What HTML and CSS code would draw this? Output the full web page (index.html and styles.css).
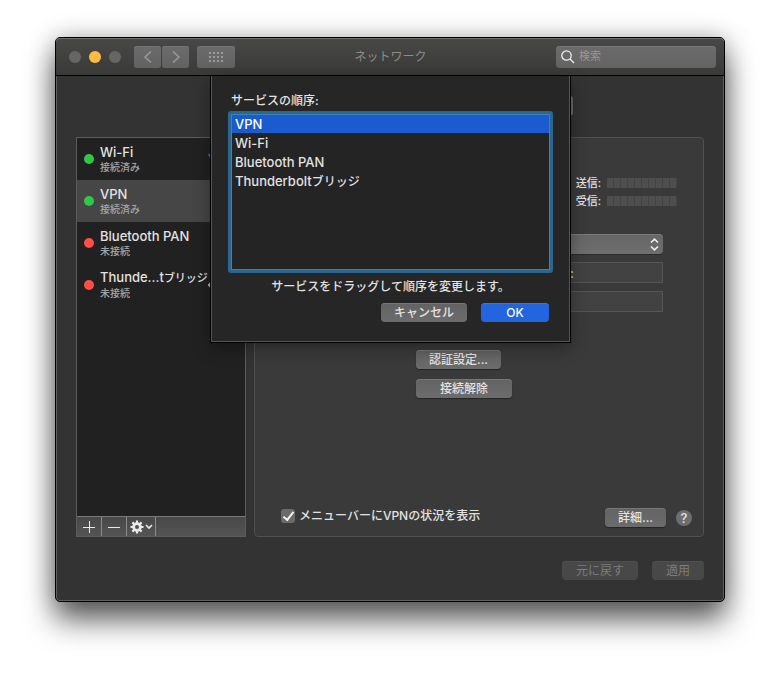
FILE: index.html
```html
<!DOCTYPE html>
<html lang="ja">
<head>
<meta charset="utf-8">
<title>ネットワーク</title>
<link rel="stylesheet" href="styles.css">
</head>
<body>
<main class="window">
  <header class="titlebar">
    <div class="lights"><span class="light"></span><span class="light light-min"></span><span class="light"></span></div>
    <div class="nav">
      <button class="tool" type="button" aria-label="戻る"><svg width="10" height="14" viewBox="0 0 10 14"><path d="M8 1.500 2 7l6 5.500"/></svg></button>
      <button class="tool" type="button" aria-label="進む"><svg width="10" height="14" viewBox="0 0 10 14"><path d="M2 1.500 8 7l-6 5.500"/></svg></button>
    </div>
    <button class="tool tool-wide" type="button" aria-label="すべてを表示"><svg width="14" height="10" viewBox="0 0 14 10"><path class="dots" d="M0 1h14M0 5h14M0 9h14"/></svg></button>
    <h1 class="title">ネットワーク</h1>
    <label class="search">
      <svg width="14" height="14" viewBox="0 0 14 14"><circle cx="5.500" cy="5.500" r="4.700"/><path d="m9 9 4 4"/></svg>
      <input type="search" placeholder="検索" aria-label="検索">
    </label>
  </header>

  <div class="content">
    <div class="location">
      <label for="location">ネ</label>
      <select id="location" class="popup"><option></option></select>
    </div>

    <div class="columns">
      <aside class="sidebar">
        <ul class="services">
          <li class="service">
            <span class="dot"></span>
            <div class="label"><div class="name">Wi-Fi</div><div class="state">接続済み</div></div>
            <svg class="kind kind-wifi" width="26" height="20" viewBox="0 0 26 20"><path d="M1 7Q13-3 25 7M5.500 11q7.500-6 15 0M9.500 15q3.500-3 7 0"/></svg>
          </li>
          <li class="service selected">
            <span class="dot"></span>
            <div class="label"><div class="name">VPN</div><div class="state">接続済み</div></div>
          </li>
          <li class="service">
            <span class="dot dot-off"></span>
            <div class="label"><div class="name">Bluetooth PAN</div><div class="state">未接続</div></div>
          </li>
          <li class="service">
            <span class="dot dot-off"></span>
            <div class="label"><div class="name">Thunde...t<span class="kana">ブリッジ</span></div><div class="state">未接続</div></div>
            <svg class="kind" width="26" height="20" viewBox="0 0 26 20"><path d="m7 4-6 6 6 6M19 4l6 6-6 6M9 10h1M13 10h1M17 10h1"/></svg>
          </li>
        </ul>
        <div class="actions">
          <button type="button" aria-label="追加"><svg width="12" height="12" viewBox="0 0 12 12"><path d="M0 6.500h12M6.500 0v12"/></svg></button>
          <button type="button" aria-label="削除"><svg width="12" height="12" viewBox="0 0 12 12"><path d="M0 6.500h12"/></svg></button>
          <button type="button" class="gear" aria-label="その他の操作"><svg width="23" height="14" viewBox="0 0 23 14"><g class="cog"><circle cx="7" cy="7" r="3.400"/><path d="M7 .5v3M7 10.500v3M.5 7h3M10.500 7h3M2.400 2.400l2.100 2.100M9.500 9.500l2.100 2.100M2.400 11.600l2.100-2.100M9.500 4.500l2.100-2.100"/></g><path class="caret" d="m16 5 3 3 3-3"/></svg></button>
        </div>
      </aside>

      <section class="panel">
        <dl class="stats">
          <dt>送信:</dt><dd class="meter"></dd>
          <dt>受信:</dt><dd class="meter"></dd>
        </dl>
        <div class="form">
          <div class="select-wrap">
            <select class="popup" aria-label="構成"><option></option></select>
            <svg width="9" height="13" viewBox="0 0 9 13"><path d="m1 4.500 3.500-3.300L8 4.500M1 8.500l3.500 3.300L8 8.500"/></svg>
          </div>
          <input class="field field-address" type="text" value=":" aria-label="サーバアドレス">
          <input class="field" type="text" aria-label="アカウント名">
        </div>
        <div class="commands">
          <button class="button" type="button">認証設定...</button>
          <button class="button button-wide" type="button">接続解除</button>
        </div>
        <div class="panel-foot">
          <label class="check"><input type="checkbox" checked><span>メニューバーにVPNの状況を表示</span></label>
          <button class="button" type="button">詳細...</button>
          <button class="help" type="button" aria-label="ヘルプ">?</button>
        </div>
      </section>
    </div>

    <footer class="footer">
      <button class="button" type="button" disabled>元に戻す</button>
      <button class="button" type="button" disabled>適用</button>
    </footer>
  </div>

  <div class="sheet" role="dialog" aria-labelledby="sheet-title">
    <h2 class="sheet-title" id="sheet-title">サービスの順序:</h2>
    <ul class="order">
      <li class="current">VPN</li>
      <li>Wi-Fi</li>
      <li>Bluetooth PAN</li>
      <li>Thunderbolt<span class="kana">ブリッジ</span></li>
    </ul>
    <p class="hint">サービスをドラッグして順序を変更します。</p>
    <div class="sheet-buttons">
      <button class="button" type="button">キャンセル</button>
      <button class="button primary" type="button">OK</button>
    </div>
  </div>
</main>
</body>
</html>
```
FILE: styles.css
```css
* { box-sizing: border-box; }

body {
  margin: 0;
  padding: 37px 55px 73px;
  background: #fff;
  color: #e2e2e2;
  font: 500 13px/19px Inter, "Noto Sans CJK JP", sans-serif;
}

button, input, select { font: inherit; color: inherit; margin: 0; }
ul, dl, dd, p, h1, h2 { margin: 0; padding: 0; list-style: none; }
svg { display: block; flex: none; fill: none; stroke: currentColor; }

.window {
  position: relative;
  border: 1px solid #000;
  border-radius: 5px;
  background: #333;
  box-shadow: inset 0 0 0 1px #606060, 0 18px 30px rgba(0, 0, 0, .62), 0 0 24px rgba(0, 0, 0, .25);
}

.titlebar {
  display: grid;
  grid-template-columns: auto auto auto 1fr 160px;
  align-items: center;
  height: 38px;
  padding: 0 8px 0 13px;
  border-bottom: 1px solid #000;
  border-radius: 4px 4px 0 0;
  background: linear-gradient(#484847, #3a3a39);
  box-shadow: inset 0 1px #6c6c6c;
}

.lights { display: flex; gap: 8px; }
.light { width: 12px; height: 12px; border-radius: 50%; background: #666; }
.light-min { background: #fdbc40; }
.nav { display: flex; gap: 1px; margin: 0 8px 0 13px; }

.tool {
  display: grid;
  place-items: center;
  width: 27px;
  height: 22px;
  padding: 0;
  border: 0;
  border-radius: 3px;
  background: linear-gradient(#6b6b6b, #626262);
  box-shadow: inset 0 1px #747474;
  color: #9a9a9a;
}

.tool svg { stroke-width: 1.500; }
.tool-wide { width: 38px; }
.tool .dots { stroke-width: 2; stroke-dasharray: 2 2; }

.title {
  justify-self: center;
  margin-right: 10px;
  color: #8c8c8c;
  font-size: 12px;
  font-weight: 400;
}

.search {
  display: flex;
  align-items: center;
  gap: 4px;
  height: 22px;
  padding: 0 5px;
  border-radius: 4px;
  background: linear-gradient(#6b6b6b, #646464);
  box-shadow: inset 0 1px #777;
}

.search svg { stroke: #eee; stroke-width: 1.300; }
.search input { width: 100%; min-width: 0; padding: 0; border: 0; background: none; font-size: 11px; font-weight: 400; }
.search input::placeholder { color: #989898; opacity: 1; }

.content { padding: 20px 20px 21px; }

.location {
  display: flex;
  justify-content: space-between;
  height: 20px;
  margin: 0 131px 21px 151px;
  font-size: 12px;
}

.popup {
  display: block;
  appearance: none;
  width: 100%;
  height: 20px;
  border: 0;
  border-radius: 4px;
  background: linear-gradient(#666, #6e6e6e);
  box-shadow: inset 0 1px #7a7a7a, 0 1px #2a2a2a;
}

.location .popup { width: 160px; }

.columns { display: flex; gap: 8px; height: 400px; }
.sidebar { display: flex; flex-direction: column; width: 170px; background: #212121; border: 1px solid #5c5c5c; }
.services { flex: 1; }
.service { display: flex; align-items: center; gap: 6px; height: 42px; padding: 0 12px 0 7px; line-height: 15px; }
.service.selected { background: #464646; }
.label { flex: none; width: 102px; }
.kind { color: #b8b8b8; stroke-width: 2; }
.kind-wifi { color: #1a84e0; stroke-width: 3; }
.name { white-space: nowrap; }
.kana { font-size: 12px; }
.name .kana { font-size: 11px; }
.dot { flex: none; width: 10px; height: 10px; border-radius: 50%; background: #30c748; }
.dot-off { background: #ff4d48; }
.state { color: #a4a4a4; font-size: 10px; line-height: 14px; }

.actions {
  display: flex;
  height: 20px;
  border-top: 1px solid #7a7a7a;
  background: linear-gradient(#484848, #545454);
}

.actions button {
  display: grid;
  place-items: center;
  width: 25px;
  padding: 0;
  border: 0;
  border-right: 1px solid #8c8c8c;
  background: none;
  color: #e8e8e8;
}

.actions .gear { width: 29px; }
.cog { stroke-width: 2.200; }
.cog circle { stroke-width: 2.800; }
.caret { stroke-width: 1.700; }

.panel {
  display: flex;
  flex: 1;
  flex-direction: column;
  padding: 36px 11px 9px 26px;
  border: 1px solid #505050;
  border-radius: 4px;
  background: #3a3a3a;
}

.stats {
  display: grid;
  grid-template-columns: auto 70px;
  grid-auto-rows: 18px;
  column-gap: 6px;
  align-items: center;
  align-self: flex-end;
  margin-right: 15px;
  font-size: 11px;
}

.meter { height: 10px; background: repeating-linear-gradient(90deg, #4e4e4e 0 6px, #434343 6px 7px); }
.form { display: grid; gap: 8px; margin: 24px 29px 0 135px; }
.select-wrap { display: grid; align-items: center; }
.select-wrap > * { grid-area: 1 / 1; }
.select-wrap svg { justify-self: end; margin-right: 4px; stroke: #eee; stroke-width: 1.700; pointer-events: none; }
.field { width: 100%; height: 21px; padding: 0 4px; border: 1px solid #555; background: #424242; }
.field-address { padding-left: 153px; }

.commands { display: flex; flex-direction: column; align-items: flex-start; gap: 10px; margin: 38px 0 0 135px; }

.button {
  height: 19px;
  padding: 0 13px;
  border: 0;
  border-radius: 4px;
  background: linear-gradient(#636363, #6c6c6c);
  box-shadow: inset 0 1px #777, 0 1px 1px #252525;
  font-size: 12px;
  line-height: 19px;
  white-space: nowrap;
}

.button-wide { padding: 0 24px; }
.button:disabled { padding: 0 14px; background: #484848; box-shadow: inset 0 1px #505050; color: #7c7c7c; font-weight: 400; }

.panel-foot { display: flex; align-items: flex-start; gap: 10px; margin-top: auto; }
.check { display: flex; align-items: center; gap: 4px; flex: 1; height: 15px; font-size: 12px; }

.check input {
  appearance: none;
  display: grid;
  place-items: center;
  width: 14px;
  height: 14px;
  border-radius: 3px;
  background: #6a6a6a;
}

.check input::before {
  content: "";
  width: 9px;
  height: 4px;
  border: solid #f2f2f2;
  border-width: 0 0 2px 2px;
  transform: translateY(-1px) rotate(-52deg);
}

.help {
  align-self: center;
  width: 16px;
  height: 16px;
  padding: 0;
  border: 0;
  border-radius: 50%;
  background: #6e6e6e;
  line-height: 16px;
}

.footer { display: flex; justify-content: flex-end; gap: 14px; margin-top: 24px; }

/* Sheet attached under the title bar */
.sheet {
  position: absolute;
  top: 38px;
  left: calc(50% - 180px);
  width: 361px;
  padding: 15px 17px 20px;
  border: 1px solid #000;
  border-top: 0;
  background: #262626;
  box-shadow: inset 1px -1px #555, inset -1px 0 #555, 0 5px 16px rgba(0, 0, 0, .35);
}

.sheet-title { margin-left: 3px; font-size: 12px; font-weight: 500; }

.order {
  height: 162px;
  margin-top: 1px;
  border: 3px solid #2b6691;
  border-radius: 3px;
  outline: 1px solid #3c83b3;
  outline-offset: -4px;
  background: #242424;
}

.order li { height: 19px; padding-left: 4px; line-height: 21px; }
.order .current { background: #1a5bd0; color: #fff; }
.hint { margin-top: 4px; font-size: 12px; text-align: center; }
.sheet-buttons { display: flex; justify-content: flex-end; gap: 14px; margin: 7px 4px 0 0; }
.primary { width: 68px; background: #2265de; box-shadow: inset 0 1px #3475e4; color: #fff; }
```
